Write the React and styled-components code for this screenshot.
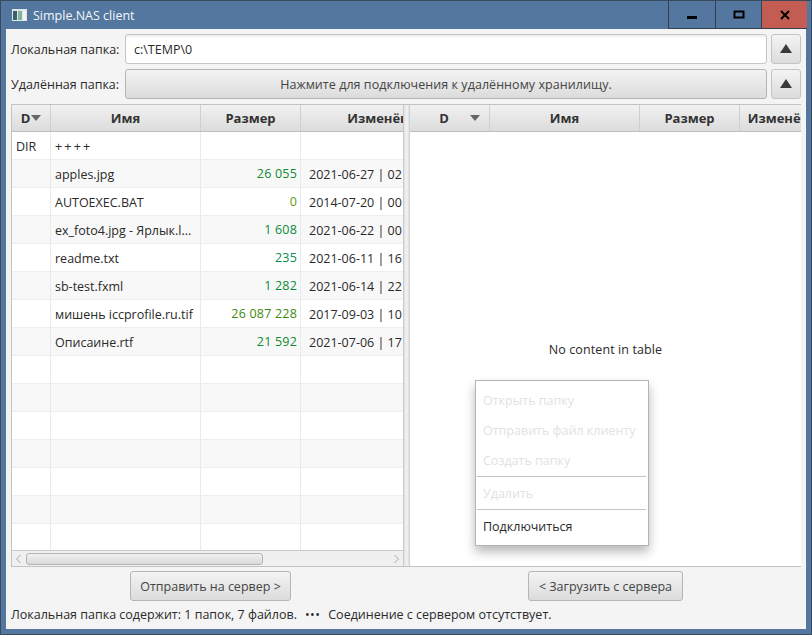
import React from 'react';
import styled, { createGlobalStyle } from 'styled-components';

const Global = createGlobalStyle`
  html, body { margin: 0; padding: 0; background: #53779f; }
  * { box-sizing: border-box; }
  body { font-family: "Open Sans", "Noto Sans", sans-serif; font-size: 12.5px; color: #2a2a2a; }
`;
const Win = styled.div`
  position: relative; width: 812px; height: 635px; background: #53779f;
  border: 1px solid #3a4a5c; display: flex; flex-direction: column;
`;
const TitleBar = styled.div`
  height: 28px; flex: none; display: flex; align-items: center; padding-left: 11px; gap: 6px;
  font-size: 12.5px;
`;
const TitleText = styled.span`flex: 1; color: #f4f6f9;`;
const Ctl = styled.div`
  width: ${p => p.$w}px; height: 28px; display: flex; align-items: center; justify-content: center;
  background: ${p => p.$close ? '#c35c52' : '#53779f'};
  border-left: 1px solid #33414f; border-bottom: 1px solid #33414f;
`;
const Controls = styled.div`display: flex; margin-right: 4px; align-self: flex-start;`;
const Content = styled.div`
  flex: 1; margin: 0 5px 5px 5px; background: #f4f4f4; padding: 5px 5px 0 5px;
  display: flex; flex-direction: column; min-height: 0;
`;
const PathRow = styled.div`
  display: flex; align-items: stretch; height: 30px; margin-bottom: 5px; gap: 4px;
`;
const Label = styled.div`width: 110px; display: flex; align-items: center;`;
const Field = styled.div`
  flex: 1; background: #fff; border: 1px solid #c6c6c6; border-radius: 3px; display: flex; align-items: center;
  padding-left: 8px; box-shadow: inset 0 2px 2px #eee;
`;
const Btn = styled.div`
  background: linear-gradient(#f3f3f3, #dcdcdc); border: 1px solid #b5b5b5; border-radius: 3px;
  display: flex; align-items: center; justify-content: center; color: #444;
`;
const WideBtn = styled(Btn)`flex: 1; letter-spacing: 0.05px;`;
const UpBtn = styled(Btn)`width: 30px; flex: none; border-color: #c4c4c4;`;
const Panes = styled.div`
  height: 463px; flex: none; display: flex; border: 1px solid #c2c2c2; background: #fff;
`;
const TablePane = styled.div`
  width: 391px; flex: none; display: flex; flex-direction: column; overflow: hidden; min-width: 0;
  background: #fff;
`;
const Divider = styled.div`
  width: 7px; flex: none; background: linear-gradient(90deg, #e2e2e2, #f3f3f3 60%, #dddddd);
  border-left: 1px solid #c9c9c9; border-right: 1px solid #d4d4d4;
`;
const HeaderRow = styled.div`display: flex; height: 27px; flex: none; border-bottom: 1px solid #bdbdbd;`;
const HCell = styled.div`
  width: ${p => p.$w}px; flex: none; height: 100%; display: flex; align-items: center; justify-content: center;
  position: relative; overflow: hidden; white-space: nowrap; padding-right: ${p => p.$pr || 0}px;
  background: linear-gradient(#f1f1f1, #dcdcdc); border-right: 1px solid #d0d0d0;
  font-weight: 700; font-size: 13px; color: #333;
`;
const Arrow = styled.span`
  width: 0; height: 0; border-left: 5px solid transparent; border-right: 5px solid transparent;
  border-top: 6px solid #666; margin-left: 1px;
`;
const SideArrow = styled(Arrow)`position: absolute; right: 9px; top: 10px; margin: 0;`;
const Rows = styled.div`flex: 1; overflow: hidden; min-height: 0;`;
const Row = styled.div`
  display: flex; width: 500px; height: 28px; background: ${p => p.$odd ? '#f8f8f8' : '#fff'}; border-bottom: 1px solid #eeeeee;
`;
const Cell = styled.div`
  width: ${p => p.$w}px; flex: none; height: 100%; border-right: 1px solid #eaeaea; padding: 1px 4px 0 4px;
  display: flex; align-items: center; overflow: hidden; white-space: nowrap;
`;
const NameCell = styled(Cell)`
  letter-spacing: ${p => p.$plus ? '2.2px' : '0'};
`;
const SizeCell = styled(Cell)`
  justify-content: flex-end; padding: 0 3px 0 0; letter-spacing: 0.2px; color: ${p => p.$color || '#2a2a2a'};
`;
const DateCell = styled(Cell)`padding-left: 8px;`;
const NoContent = styled.div`flex: 1; display: flex; align-items: center; justify-content: center; letter-spacing: 0.1px;`;
const ScrollBar = styled.div`
  height: 16px; flex: none; background: #f0f0f0; border-top: 1px solid #c8c8c8; display: flex; align-items: center;
  padding: 0 3px; justify-content: space-between; color: #999;
`;
const Thumb = styled.div`
  width: 237px; height: 12px; margin-left: 4px; margin-right: auto;
  background: linear-gradient(#f0f0f0, #dadada); border: 1px solid #b5b5b5; border-radius: 3px;
`;
const Actions = styled.div`display: flex; height: 36px; flex: none; padding-top: 4px;`;
const ActionCol = styled.div`width: ${p => p.$w}px; flex: none; display: flex; justify-content: center;`;
const ActionBtn = styled(Btn)`height: 30px; padding: 0 9.5px;`;
const Status = styled.div`padding-top: 3px; white-space: pre; display: flex;`;
const Dots = styled.span`margin: 0 8px 0 8px; letter-spacing: 0.4px;`;
const Menu = styled.div`
  position: absolute; left: 474px; top: 379px; width: 174px; height: 166px; background: #fff;
  border: 1px solid #b4b4b4; box-shadow: 0 6px 10px rgba(0,0,0,.28); display: flex; flex-direction: column;
  padding: 4px 2px 4px 1px;
`;
const MenuItem = styled.div`
  height: ${p => p.$tall ? 32 : 30}px; flex: none; display: flex; align-items: center; padding-left: 6px;
  color: ${p => p.$on ? '#2a2a2a' : '#e2e2e2'};
`;
const Sep = styled.div`height: 1px; background: #c4c4c4; margin-top: ${p => p.$mt || 0}px; flex: none;`;

const cols = [39, 150, 100, 155];
const files = [
  ['DIR', '++++', '', '', ''],
  ['', 'apples.jpg', '26 055', '2021-06-27 | 02', '#0b8a2e'],
  ['', 'AUTOEXEC.BAT', '0', '2014-07-20 | 00', '#5c9a08'],
  ['', 'ex_foto4.jpg - Ярлык.l...', '1 608', '2021-06-22 | 00', '#0b8a3c'],
  ['', 'readme.txt', '235', '2021-06-11 | 16', '#078a50'],
  ['', 'sb-test.fxml', '1 282', '2021-06-14 | 22', '#0b8a3c'],
  ['', 'мишень iccprofile.ru.tif', '26 087 228', '2017-09-03 | 10', '#3c8a0c'],
  ['', 'Описаине.rtf', '21 592', '2021-07-06 | 17', '#0b8a2e'],
  ['', '', '', '', ''], ['', '', '', '', ''], ['', '', '', '', ''], ['', '', '', '', ''], ['', '', '', '', ''], ['', '', '', '', ''], ['', '', '', '', ''],
];

const Up = () => <svg width="14" height="10" viewBox="0 0 14 10"><path d="M7 0 L13 9 L1 9 Z" fill="#3a3a3a" /></svg>;

export default function App() {
  return (
    <>
      <Global />
      <Win>
        <TitleBar>
          <svg width="15" height="12" viewBox="0 0 15 12">
            <rect x="0" y="0" width="15" height="12" fill="#dfe6ea" />
            <rect x="1" y="2" width="4" height="9" fill="#3f5f68" />
            <rect x="6" y="2" width="4" height="9" fill="#7fb59a" />
            <rect x="11" y="2" width="3" height="9" fill="#f4f4f4" />
          </svg>
          <TitleText>Simple.NAS client</TitleText>
          <Controls>
            <Ctl $w={47}><svg width="12" height="12" viewBox="0 0 12 12"><rect x="1" y="7" width="10" height="3" fill="#000" /></svg></Ctl>
            <Ctl $w={46}><svg width="12" height="12" viewBox="0 0 12 12"><path d="M1.5 2.5h9v6h-9z" fill="none" stroke="#000" strokeWidth="2" /></svg></Ctl>
            <Ctl $w={46} $close><svg width="12" height="12" viewBox="0 0 12 12"><path d="M2 2 L10 10 M10 2 L2 10" stroke="#000" strokeWidth="2" /></svg></Ctl>
          </Controls>
        </TitleBar>
        <Content>
          <PathRow>
            <Label>Локальная папка:</Label>
            <Field>c:\TEMP\0</Field>
            <UpBtn><Up /></UpBtn>
          </PathRow>
          <PathRow>
            <Label>Удалённая папка:</Label>
            <WideBtn>Нажмите для подключения к удалённому хранилищу.</WideBtn>
            <UpBtn><Up /></UpBtn>
          </PathRow>
          <Panes>
            <TablePane>
              <HeaderRow>
                <HCell $w={cols[0]}>D<Arrow /></HCell>
                <HCell $w={cols[1]}>Имя</HCell>
                <HCell $w={cols[2]}>Размер</HCell>
                <HCell $w={cols[3]}>Изменён</HCell>
              </HeaderRow>
              <Rows>
                {files.map((f, i) => (
                  <Row key={i} $odd={i % 2 === 1}>
                    <Cell $w={cols[0]}>{f[0]}</Cell>
                    <NameCell $w={cols[1]} $plus={f[1] === '++++'}>{f[1]}</NameCell>
                    <SizeCell $w={cols[2]} $color={f[4]}>{f[2]}</SizeCell>
                    <DateCell $w={cols[3]}>{f[3]}</DateCell>
                  </Row>
                ))}
              </Rows>
              <ScrollBar>
                <svg width="7" height="10" viewBox="0 0 7 10"><path d="M5.5 1 L1.5 5 L5.5 9" fill="none" stroke="#aaa" strokeWidth="1" /></svg>
                <Thumb />
                <svg width="7" height="10" viewBox="0 0 7 10"><path d="M1.5 1 L5.5 5 L1.5 9" fill="none" stroke="#aaa" strokeWidth="1" /></svg>
              </ScrollBar>
            </TablePane>
            <Divider />
            <TablePane>
              <HeaderRow>
                <HCell $w={80} $pr={11}>D<SideArrow /></HCell>
                <HCell $w={150}>Имя</HCell>
                <HCell $w={100}>Размер</HCell>
                <HCell $w={78}>Изменён</HCell>
              </HeaderRow>
              <NoContent>No content in table</NoContent>
            </TablePane>
          </Panes>
          <Actions>
            <ActionCol $w={399}><ActionBtn>Отправить на сервер &gt;</ActionBtn></ActionCol>
            <ActionCol $w={391}><ActionBtn>&lt; Загрузить с сервера</ActionBtn></ActionCol>
          </Actions>
          <Status>Локальная папка содержит: 1 папок, 7 файлов.<Dots>•••</Dots>Соединение с сервером отсутствует.</Status>
        </Content>
        <Menu>
          <MenuItem>Открыть папку</MenuItem>
          <MenuItem>Отправить файл клиенту</MenuItem>
          <MenuItem>Создать папку</MenuItem>
          <Sep $mt={1} />
          <MenuItem $tall>Удалить</MenuItem>
          <Sep />
          <MenuItem $on $tall>Подключиться</MenuItem>
        </Menu>
      </Win>
    </>
  );
}
